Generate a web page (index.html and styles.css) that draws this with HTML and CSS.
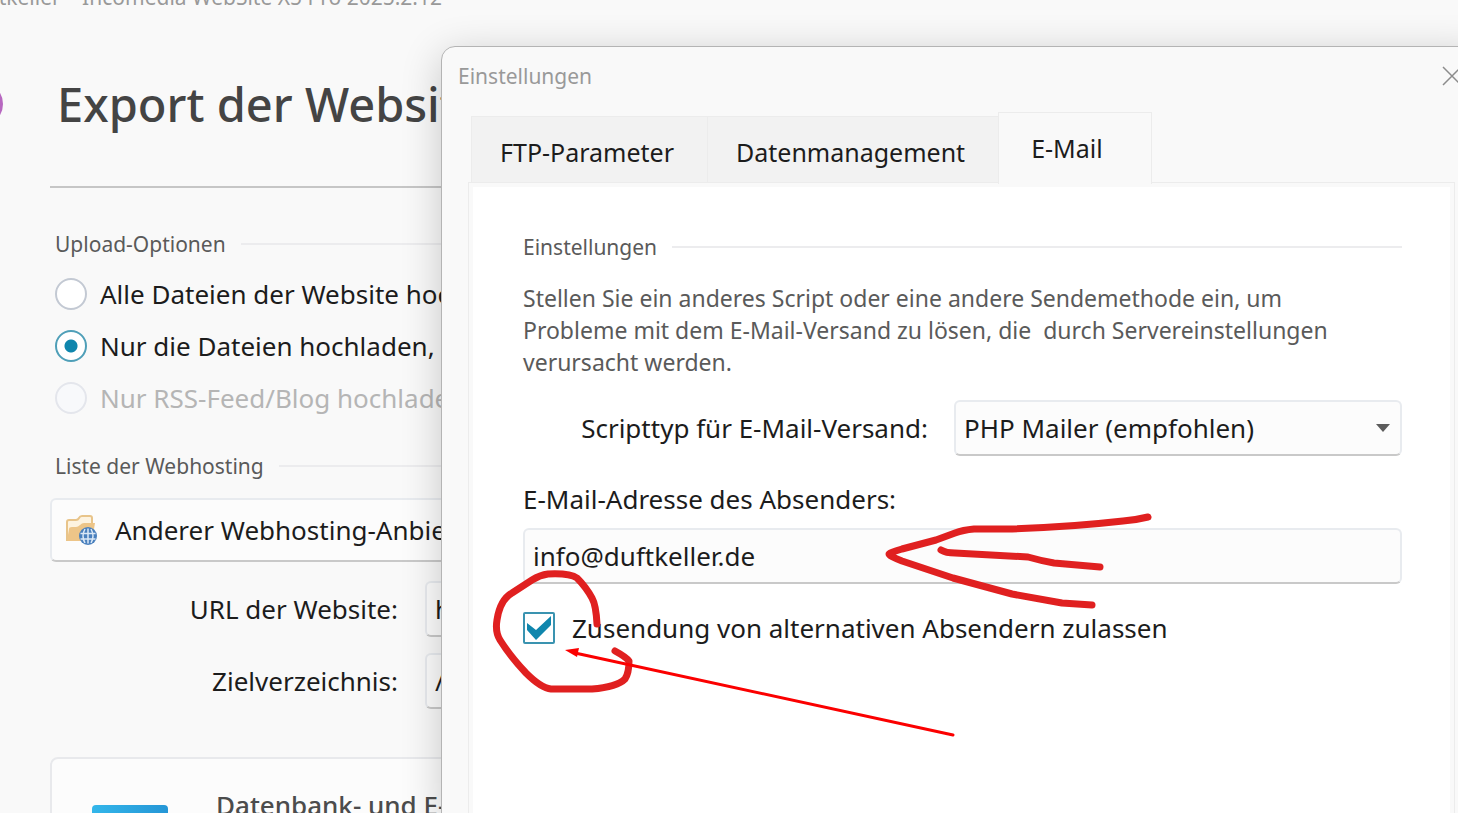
FILE: index.html
```html
<!DOCTYPE html>
<html lang="de">
<head>
<meta charset="utf-8">
<meta name="viewport" content="width=device-width, initial-scale=1">
<title>Export der Website</title>
<link rel="stylesheet" href="styles.css">
</head>
<body>
<main class="app">
  <div class="app-title"><span>Duftkeller – Incomedia WebSite X5 Pro 2025.2.12</span></div>
  <header class="app-header">
    <span class="logo"></span>
    <h1>Export der Website</h1>
  </header>
  <div class="app-body">
    <h2 class="section-title">Upload-Optionen</h2>
    <div class="options">
      <label class="option"><input type="radio" name="upload">Alle Dateien der Website hochladen</label>
      <label class="option"><input type="radio" name="upload" checked>Nur die Dateien hochladen,</label>
      <label class="option disabled"><input type="radio" name="upload" disabled>Nur RSS-Feed/Blog hochladen</label>
    </div>
    <h2 class="section-title hosting-title">Liste der Webhosting</h2>
    <button class="hosting" type="button">
      <svg width="32" height="32" viewBox="0 0 32 32" aria-hidden="true">
        <path d="M2 27V8q0-2 2-2h7q2 0 3-2t3-2h8q2 0 2 2v6" fill="#fdf3e0" stroke="#e8c48a" stroke-width="2"/>
        <path d="M2 27l2-12q0-2 3-2h4q2 0 4-2t4-2h11l-3 18z" fill="#edc588"/>
        <circle cx="23" cy="22" r="9" fill="#4a80bd"/>
        <path d="M15.500 19.500h15M15.500 25h15M23 14.500v15M20 15q-4 7 0 14M26 15q4 7 0 14" fill="none" stroke="#dbe8f6" stroke-width="1.500"/>
      </svg>
      <span>Anderer Webhosting-Anbieter</span>
    </button>
    <div class="fields">
      <label for="url">URL der Website:</label>
      <input class="box" id="url" type="text" value="http://">
      <label for="dir">Zielverzeichnis:</label>
      <input class="box" id="dir" type="text" value="/">
    </div>
    <section class="card">
      <span class="card-icon"></span>
      <h3>Datenbank- und E-Mail</h3>
    </section>
  </div>
</main>

<div class="dialog" role="dialog" aria-labelledby="dialog-title">
  <header class="dialog-bar">
    <span id="dialog-title">Einstellungen</span>
    <button class="close" type="button" aria-label="Schließen">
      <svg width="20" height="20" viewBox="0 0 20 20" aria-hidden="true"><path d="M1 1l18 18M19 1L1 19" stroke="#8c8c8c" stroke-width="1.500"/></svg>
    </button>
  </header>
  <nav class="tabs" role="tablist">
    <button class="tab" type="button" role="tab">FTP-Parameter</button>
    <button class="tab" type="button" role="tab">Datenmanagement</button>
    <button class="tab active" type="button" role="tab" aria-selected="true">E-Mail</button>
  </nav>
  <section class="panel">
    <h2 class="section-title">Einstellungen</h2>
    <p class="intro">Stellen Sie ein anderes Script oder eine andere Sendemethode ein, um<br>Probleme mit dem E-Mail-Versand zu lösen, die&nbsp; durch Servereinstellungen<br>verursacht werden.</p>
    <div class="script-row">
      <label for="script">Scripttyp für E-Mail-Versand:</label>
      <div class="select-wrap">
        <select class="box" id="script"><option>PHP Mailer (empfohlen)</option></select>
        <svg class="caret" width="14" height="9" viewBox="0 0 14 9" aria-hidden="true"><path d="M0 0h14L7 8z" fill="#5c5c5c"/></svg>
      </div>
    </div>
    <label class="sender-label" for="sender">E-Mail-Adresse des Absenders:</label>
    <input class="box" id="sender" type="text" value="info@duftkeller.de">
    <label class="check"><span class="tick"><input type="checkbox" checked><svg width="32" height="32" viewBox="0 0 32 32" aria-hidden="true"><path d="M4 11l9 7L28 4v9L13 28 4 18z" fill="#0f86ad"/></svg></span>Zusendung von alternativen Absendern zulassen</label>
  </section>
</div>

<svg class="marks" width="700" height="260" viewBox="480 500 700 260" aria-hidden="true">
  <g fill="none" stroke="#e02020" stroke-width="7" stroke-linecap="round" stroke-linejoin="round">
    <path d="M1148 517Q1136 520 1123 521Q1070 527 1012 529H974Q963 530 955 533L936 540L902 549Q889 553 889 554Q889 556 902 561L953 578L1012 594L1062 603L1092 605"/>
    <path d="M941 550Q946 553 955 553L1028 557Q1042 561 1054 563L1100 567"/>
    <path d="M597 624Q596 605 592 598Q586 587 577 578Q570 573 548 574Q540 575 532 580L512 593Q500 600 497 620Q495 632 500 640Q510 656 526 673Q541 688 551 689H592Q617 687 625 679Q629 673 629 661Q626 657 615 651"/>
  </g>
  <path d="M575 653L953 735" stroke="#fb0000" stroke-width="3" stroke-linecap="round"/>
  <path d="M565 650l14-2-2 9z" fill="#fb0000"/>
</svg>
</body>
</html>
```
FILE: styles.css
```css
* { box-sizing: border-box; }

body {
  margin: 0;
  position: relative;
  height: 100vh;
  overflow: hidden;
  background: #f9f9f9;
  color: #1c1c1c;
  font: 26px/36px "Noto Sans", "Open Sans", sans-serif;
}

h1, h2, h3, p { margin: 0; font-weight: 400; }
input, button, select { font: inherit; color: inherit; margin: 0; }
label { white-space: nowrap; }

.app {
  height: 100vh;
  overflow: hidden;
}

.app-title {
  display: flex;
  justify-content: flex-end;
  width: 442px;
  margin-top: -18px;
  white-space: nowrap;
  color: #999;
  font-size: 21px;
  line-height: 30px;
}

.app-header {
  display: flex;
  align-items: center;
  gap: 54px;
  height: 174px;
  padding-top: 10px;
}

.logo {
  flex: none;
  width: 44px;
  height: 44px;
  margin-left: -41px;
  border: 4px solid #b768c0;
  border-radius: 50%;
}

h1 {
  color: #444;
  font-size: 47px;
  line-height: 56px;
  font-weight: 500;
  white-space: nowrap;
}

.app-body {
  margin-left: 50px;
  padding-top: 40px;
  border-top: 2px solid #c6c6c6;
}

.section-title {
  display: flex;
  align-items: center;
  gap: 15px;
  color: #5a5a5a;
  font-size: 21px;
  line-height: 32px;
}

.section-title::after {
  content: "";
  flex: 1;
  height: 2px;
  background: #ececee;
}

.app-body .section-title { padding-left: 5px; }
.app-body .hosting-title { margin-top: 34px; }

.options {
  display: grid;
  gap: 16px;
  padding: 16px 0 0 5px;
}

.option {
  display: flex;
  align-items: center;
  gap: 13px;
}

.option.disabled { color: #b5b5b5; }

.option input {
  appearance: none;
  width: 32px;
  height: 32px;
  border: 2px solid #c3c9d3;
  border-radius: 50%;
  background: #fff;
}

.option input:checked {
  border-color: #4f9fb8;
  background: radial-gradient(circle, #0f86ad 6px, #fff 7px);
}

.option input:disabled {
  border-color: #e4e6ec;
  background: #f8f9fb;
}

.box, .hosting {
  border: 2px solid #e8ebef;
  border-bottom-color: #c9c9c9;
  border-radius: 6px;
  background: #fcfcfc;
}

.hosting {
  display: flex;
  align-items: center;
  gap: 18px;
  width: 100%;
  height: 64px;
  margin-top: 16px;
  padding: 0 13px;
}

.box {
  width: 100%;
  height: 56px;
  padding: 0 8px;
}

.fields {
  display: grid;
  grid-template-columns: 348px 1fr;
  align-items: center;
  gap: 16px 27px;
  padding: 19px 0 48px;
}

.fields label { text-align: right; }

.card {
  display: flex;
  gap: 48px;
  height: 160px;
  padding: 28px 40px;
  border: 2px solid #e8e9ec;
  border-radius: 8px;
  background: #fcfcfc;
}

.card-icon {
  width: 76px;
  height: 76px;
  margin-top: 18px;
  border-radius: 4px;
  background: linear-gradient(90deg, #33b6ea, #2596d6);
}

h3 {
  color: #4c4c4c;
  font-size: 26px;
  font-weight: 500;
}

/* Settings dialog, floating over the export window */
.dialog {
  position: absolute;
  top: 46px;
  left: 441px;
  right: -30px;
  bottom: -8px;
  display: flex;
  flex-direction: column;
  padding: 0 32px 0 26px;
  border: 1px solid #b4b4b4;
  border-radius: 14px 14px 0 0;
  background: #f9f9f9;
  box-shadow: 0 8px 40px rgba(0, 0, 0, 0.2);
}

.dialog-bar {
  display: flex;
  justify-content: space-between;
  align-items: center;
  height: 65px;
  padding-bottom: 8px;
  margin: 0 -7px 0 -10px;
  color: #999;
  font-size: 21px;
}

.close {
  display: flex;
  padding: 0;
  border: 0;
  background: none;
}

.tabs {
  display: flex;
  align-items: flex-end;
  padding-left: 3px;
}

.tab {
  height: 66px;
  padding: 4px 33px 0 28px;
  border: 1px solid #ececec;
  border-width: 1px 0 0 1px;
  background: #f2f2f2;
  font-size: 25px;
}

.tab.active {
  position: relative;
  height: 72px;
  margin-bottom: -2px;
  padding: 0 48px 2px 32px;
  border-width: 1px 1px 0;
  background: #f9f9f9;
}

.panel {
  flex: 1;
  padding: 48px 52px 0 54px;
  border: 1px solid #ececec;
  outline: 4px solid #f9f9f9;
  outline-offset: -5px;
  background: #fff;
}

.intro {
  margin-top: 19px;
  color: #5a5a5a;
  font-size: 23px;
  line-height: 32px;
}

.script-row {
  display: flex;
  align-items: center;
  justify-content: flex-end;
  gap: 26px;
  margin-top: 22px;
}

.select-wrap {
  position: relative;
  width: 448px;
}

.select-wrap select { appearance: none; }

.caret {
  position: absolute;
  right: 12px;
  top: 24px;
}

.sender-label {
  display: block;
  margin: 25px 0 11px;
}

.check {
  display: flex;
  align-items: center;
  gap: 17px;
  margin-top: 26px;
}

.tick {
  display: grid;
  flex: none;
}

.tick > * { grid-area: 1 / 1; }

.tick input {
  appearance: none;
  width: 32px;
  height: 32px;
  border: 2px solid #3a93b0;
  border-radius: 2px;
  background: #fff;
}

.tick svg { pointer-events: none; }

/* Red pen marks drawn across the dialog */
.marks {
  position: absolute;
  left: 480px;
  top: 500px;
  pointer-events: none;
}
```
